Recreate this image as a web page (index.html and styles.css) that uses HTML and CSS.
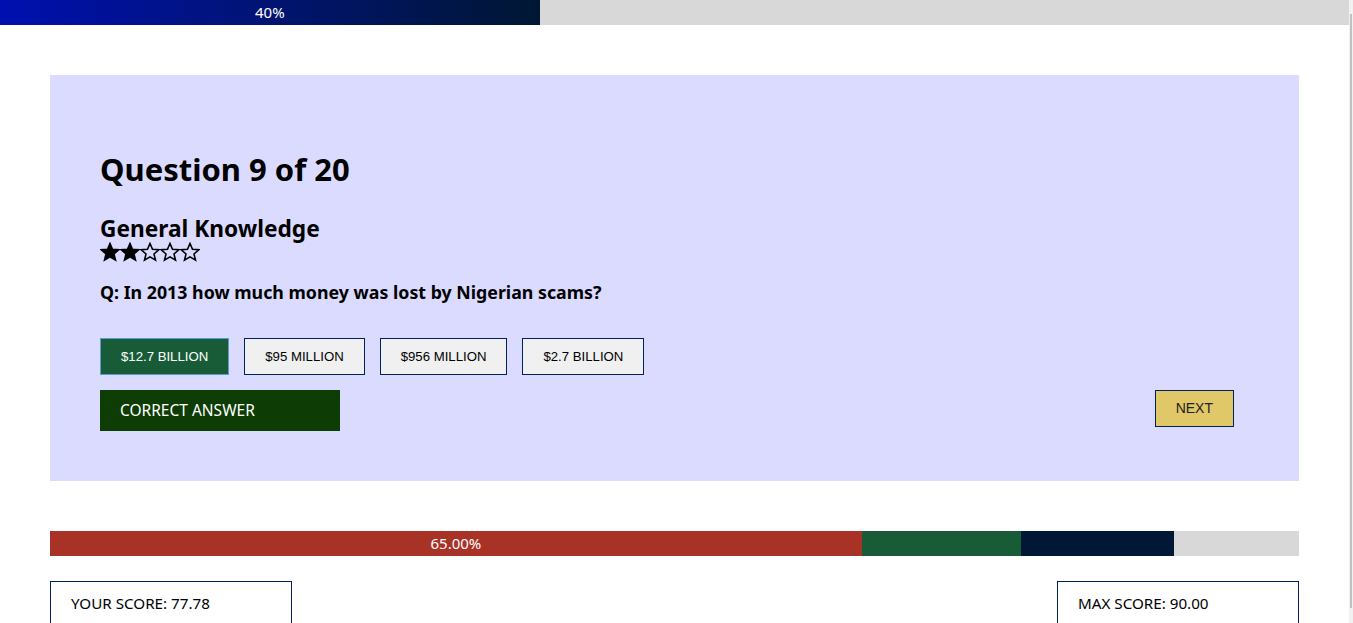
FILE: index.html
```html
<!DOCTYPE html>
<html>
<head>
<meta charset="utf-8">
<link rel="stylesheet" href="styles.css">
</head>
<body>
<div class="progress-top">
  <div class="progress-top-fill" style="width:40%">40%</div>
</div>
<main class="page">
  <section class="card">
    <h1 class="q-count">Question 9 of 20</h1>
    <h2 class="category">General Knowledge</h2>
    <div class="stars" aria-label="2 of 5 stars">
      <svg class="star full" viewBox="0 0 20 20"><path d="M10 1.5 L12.5 7.3 L18.8 7.8 L14 12 L15.5 18.2 L10 14.9 L4.5 18.2 L6 12 L1.2 7.8 L7.5 7.3 Z"/></svg>
      <svg class="star full" viewBox="0 0 20 20"><path d="M10 1.5 L12.5 7.3 L18.8 7.8 L14 12 L15.5 18.2 L10 14.9 L4.5 18.2 L6 12 L1.2 7.8 L7.5 7.3 Z"/></svg>
      <svg class="star" viewBox="0 0 20 20"><path d="M10 1.5 L12.5 7.3 L18.8 7.8 L14 12 L15.5 18.2 L10 14.9 L4.5 18.2 L6 12 L1.2 7.8 L7.5 7.3 Z"/></svg>
      <svg class="star" viewBox="0 0 20 20"><path d="M10 1.5 L12.5 7.3 L18.8 7.8 L14 12 L15.5 18.2 L10 14.9 L4.5 18.2 L6 12 L1.2 7.8 L7.5 7.3 Z"/></svg>
      <svg class="star" viewBox="0 0 20 20"><path d="M10 1.5 L12.5 7.3 L18.8 7.8 L14 12 L15.5 18.2 L10 14.9 L4.5 18.2 L6 12 L1.2 7.8 L7.5 7.3 Z"/></svg>
    </div>
    <p class="question">Q: In 2013 how much money was lost by Nigerian scams?</p>
    <div class="answers">
      <button class="answer selected">$12.7 BILLION</button>
      <button class="answer">$95 MILLION</button>
      <button class="answer">$956 MILLION</button>
      <button class="answer">$2.7 BILLION</button>
    </div>
    <div class="result-row">
      <div class="result">CORRECT ANSWER</div>
      <button class="next">NEXT</button>
    </div>
  </section>
  <div class="score-bar">
    <div class="seg seg-red" style="width:65%">65.00%</div>
    <div class="seg seg-green" style="width:12.73%"></div>
    <div class="seg seg-navy" style="width:12.25%"></div>
  </div>
  <div class="scores">
    <div class="score-box">YOUR SCORE: 77.78</div>
    <div class="score-box">MAX SCORE: 90.00</div>
  </div>
</main>
</body>
</html>
```
FILE: styles.css
```css
html {
  background: #f1f1f1 linear-gradient(#c1c1c1, #c1c1c1) no-repeat;
  background-position: right 1px top 14px;
  background-size: 2px 594px;
  background-attachment: fixed;
}
body {
  margin: 0 4px 0 0;
  font-family: "Noto Sans", "Open Sans", sans-serif;
  color: #000;
  background: #fff;
}
.progress-top {
  height: 25px;
  background: #d8d8d8;
  display: flex;
}
.progress-top-fill {
  background: linear-gradient(to right, #0010b0, #001733);
  color: #fff;
  font-size: 15px;
  line-height: 25px;
  text-align: center;
}
.page {
  padding: 50px 50px 60px;
}
.card {
  background: #dadbff;
  padding: 50px;
}
.q-count {
  margin: 24px 0 0;
  font-size: 31px;
  font-weight: 700;
  line-height: 40px;
}
.category {
  margin: 26px 0 0;
  font-size: 22.7px;
  line-height: 28px;
  font-weight: 700;
}
.stars {
  display: flex;
  height: 20px;
  margin-top: -1px;
}
.star {
  width: 20px;
  height: 20px;
  fill: none;
  stroke: #000;
  stroke-width: 1.6;
  stroke-linejoin: miter;
}
.star.full {
  fill: #000;
}
.question {
  margin: 18px 0 0;
  font-size: 17.8px;
  font-weight: 700;
  line-height: 24px;
}
.answers {
  display: flex;
  gap: 15px;
  margin-top: 34px;
}
.answer {
  font-family: "Liberation Sans", Arial, sans-serif;
  font-size: 13.2px;
  background: #f0f0f0;
  border: 1px solid #002060;
  color: #000;
  padding: 10px 20px;
  line-height: 15px;
}
.answer.selected {
  background: #185c37;
  color: #fff;
  border-color: #5b9bd5;
}
.result-row {
  display: flex;
  justify-content: space-between;
  align-items: flex-start;
  margin-top: 15px;
}
.result {
  width: 220px;
  background: #0d3d04;
  color: #fff;
  font-size: 15.5px;
  line-height: 41px;
  padding-left: 20px;
}
.next {
  font-family: "Liberation Sans", Arial, sans-serif;
  font-size: 14px;
  background: #e0c869;
  border: 1px solid #002060;
  color: #222;
  padding: 10px 20px;
  line-height: 15px;
  margin-right: 15px;
}
.score-bar {
  margin-top: 50px;
  height: 25px;
  background: #d8d8d8;
  display: flex;
}
.seg {
  height: 25px;
  color: #fff;
  font-size: 15px;
  line-height: 25px;
  text-align: center;
}
.seg-red { background: #a93226; }
.seg-green { background: #185c37; }
.seg-navy { background: #001736; }
.scores {
  display: flex;
  justify-content: space-between;
  margin-top: 25px;
}
.score-box {
  width: 200px;
  border: 1px solid #002060;
  padding: 11px 20px 40px;
  font-size: 15.2px;
  line-height: 20px;
}
```
